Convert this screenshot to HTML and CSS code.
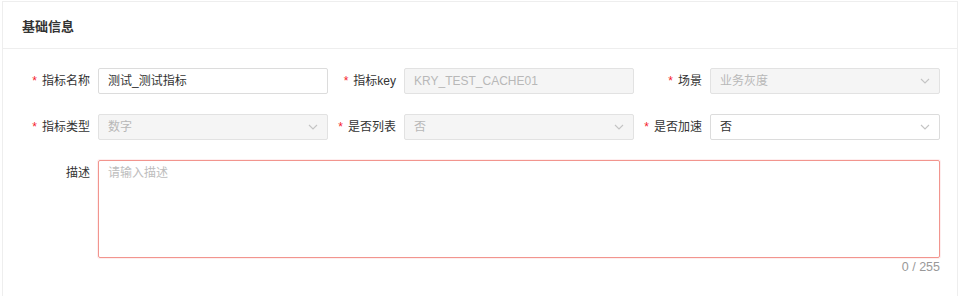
FILE: index.html
```html
<!DOCTYPE html>
<html lang="zh-CN">
<head>
<meta charset="utf-8">
<link rel="stylesheet" href="styles.css">
</head>
<body>
<div class="card">
  <div class="card-head"><span class="title">基础信息</span></div>
  <div class="form">
    <div class="grid">
      <div class="item">
        <div class="label"><span class="req">*</span>指标名称</div>
        <div class="control"><div class="input">测试_测试指标</div></div>
      </div>
      <div class="item">
        <div class="label"><span class="req">*</span>指标key</div>
        <div class="control"><div class="input disabled">KRY_TEST_CACHE01</div></div>
      </div>
      <div class="item">
        <div class="label"><span class="req">*</span>场景</div>
        <div class="control"><div class="input select disabled"><span>业务灰度</span><svg class="arrow" width="10" height="6" viewBox="0 0 10 6"><polyline points="1,1 5,5 9,1" fill="none" stroke="#c4c4c4" stroke-width="1.1"/></svg></div></div>
      </div>
      <div class="item">
        <div class="label"><span class="req">*</span>指标类型</div>
        <div class="control"><div class="input select disabled"><span>数字</span><svg class="arrow" width="10" height="6" viewBox="0 0 10 6"><polyline points="1,1 5,5 9,1" fill="none" stroke="#c4c4c4" stroke-width="1.1"/></svg></div></div>
      </div>
      <div class="item">
        <div class="label"><span class="req">*</span>是否列表</div>
        <div class="control"><div class="input select disabled"><span>否</span><svg class="arrow" width="10" height="6" viewBox="0 0 10 6"><polyline points="1,1 5,5 9,1" fill="none" stroke="#c4c4c4" stroke-width="1.1"/></svg></div></div>
      </div>
      <div class="item">
        <div class="label"><span class="req">*</span>是否加速</div>
        <div class="control"><div class="input select"><span>否</span><svg class="arrow" width="10" height="6" viewBox="0 0 10 6"><polyline points="1,1 5,5 9,1" fill="none" stroke="#c4c4c4" stroke-width="1.1"/></svg></div></div>
      </div>
    </div>
    <div class="item wide">
      <div class="label">描述</div>
      <div class="control">
        <div class="textarea"><span class="placeholder">请输入描述</span></div>
        <div class="count">0 / 255</div>
      </div>
    </div>
  </div>
</div>
</body>
</html>
```

FILE: styles.css
```css
* { box-sizing: border-box; }
html, body { margin: 0; padding: 0; background: #fff; }
body {
  font-family: "Liberation Sans", "Noto Sans CJK SC", sans-serif;
  font-size: 12px;
  color: #333;
}
.card {
  margin: 1px 2px 0 2px;
  border: 1px solid #eeeeee;
  border-bottom: none;
  height: 295px;
}
.card-head {
  height: 47px;
  border-bottom: 1px solid #eeeeee;
  display: flex;
  align-items: center;
  padding-left: 19px;
}
.title {
  font-size: 13px;
  font-weight: bold;
  color: #333;
}
.form {
  padding: 19px 17px 0 19px;
}
.grid {
  display: grid;
  grid-template-columns: repeat(3, 306px);
  row-gap: 20px;
}
.item {
  display: flex;
  align-items: flex-start;
}
.wide { margin-top: 20px; }
.label {
  width: 76px;
  flex: none;
  height: 26px;
  line-height: 26px;
  text-align: right;
  padding-right: 8px;
  color: #333;
  white-space: nowrap;
}
.req {
  color: #f5222d;
  margin-right: 5px;
  font-size: 12px;
  font-family: "Liberation Sans", sans-serif;
}
.control { flex: 1; min-width: 0; }
.input {
  height: 26px;
  border: 1px solid #dcdcdc;
  border-radius: 2px;
  padding: 0 9px;
  line-height: 24px;
  color: #333;
  background: #fff;
  display: flex;
  align-items: center;
  justify-content: space-between;
}
.input.disabled {
  background: #f5f5f5;
  border-color: #e2e2e2;
  color: #b8b8b8;
}
.arrow { flex: none; margin-right: 0; }
.textarea {
  height: 98px;
  border: 1px solid #f2958e;
  border-radius: 2px;
  box-shadow: 0 0 0 1px rgba(245, 34, 45, 0.08);
  padding: 4px 9px;
  line-height: 16px;
}
.placeholder { color: #bdbdbd; }
.count {
  text-align: right;
  color: #999;
  font-size: 12.5px;
  line-height: 18px;
  height: 18px;
}
```
